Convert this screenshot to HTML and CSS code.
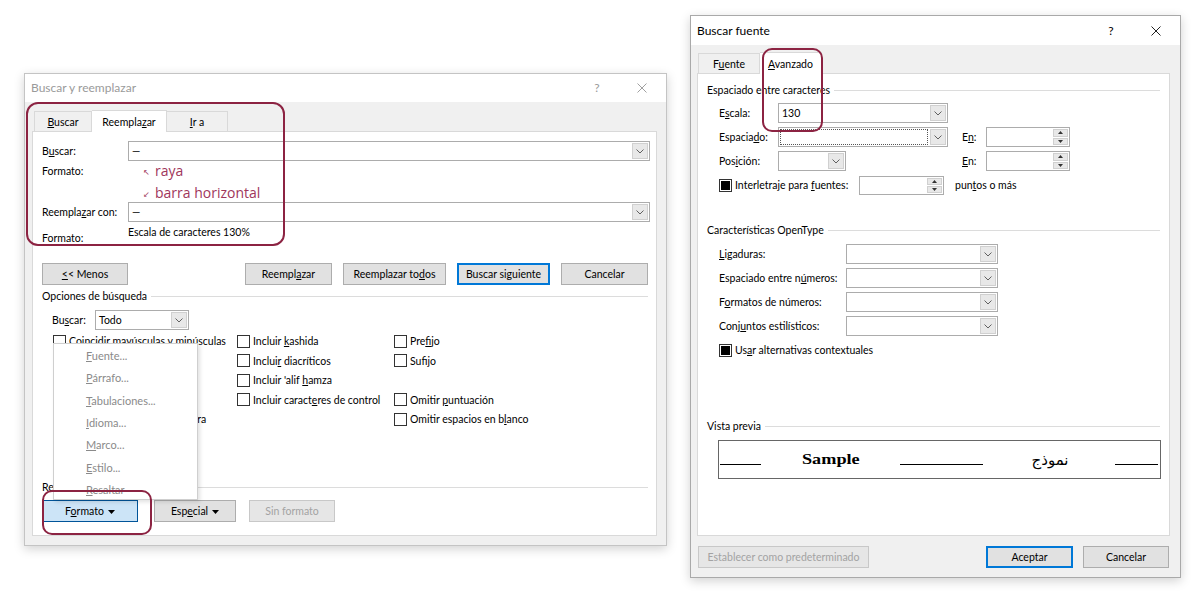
FILE: index.html
```html
<!DOCTYPE html>
<html lang="es">
<head>
  <meta charset="UTF-8">
  <title>Buscar y reemplazar / Buscar fuente</title>
  <link rel="stylesheet" href="styles.css">
</head>
<body>

  <!-- Buscar y reemplazar -->
  <div class="window find-replace">
    <div class="titlebar">
      <span class="title">Buscar y reemplazar</span>
      <span class="tb-help">?</span>
      <span class="tb-close"><svg width="10" height="10" viewBox="0 0 10 10"><path d="M0.5 0.5 9.5 9.5M9.5 0.5 0.5 9.5" stroke="#a0a0a0" stroke-width="1"/></svg></span>
    </div>
    <div class="tabs">
      <div class="tab tab-find"><span><u>B</u>uscar</span></div>
      <div class="tab tab-replace active"><span>Reempla<u>z</u>ar</span></div>
      <div class="tab tab-goto"><span><u>I</u>r a</span></div>
    </div>
    <div class="panel">
      <div class="field-row">
        <span>B<u>u</u>scar:</span>
        <div class="combo">
          <span class="combo-text">—</span>
          <span class="combo-btn"><svg width="8" height="5" viewBox="0 0 8 5"><path d="M0.5 0.5 4 4 7.5 0.5" fill="none" stroke="#606060"/></svg></span>
        </div>
      </div>
      <div class="notes-row">
        <span class="row-label">Formato:</span>
        <div class="notes">
          <div class="note"><span class="note-arrow">↖</span>raya</div>
          <div class="note"><span class="note-arrow">↙</span>barra horizontal</div>
        </div>
      </div>
      <div class="field-row">
        <span>Reempla<u>z</u>ar con:</span>
        <div class="combo">
          <span class="combo-text">—</span>
          <span class="combo-btn"><svg width="8" height="5" viewBox="0 0 8 5"><path d="M0.5 0.5 4 4 7.5 0.5" fill="none" stroke="#606060"/></svg></span>
        </div>
      </div>
      <div class="format-row">
        <span class="row-label">Formato:</span>
        <span class="format-value">Escala de caracteres 130%</span>
      </div>

      <div class="button-row">
        <button class="btn btn-less"><span><u>&lt;</u>&lt; Menos</span></button>
        <div class="action-buttons">
          <button class="btn btn-replace"><span>Reempl<u>a</u>zar</span></button>
          <button class="btn btn-replace-all"><span>Reemplazar to<u>d</u>os</span></button>
          <button class="btn btn-next default"><span>Buscar siguiente</span></button>
          <button class="btn btn-cancel"><span>Cancelar</span></button>
        </div>
      </div>

      <div class="group-legend options-legend">Opciones de búsqueda</div>
      <div class="search-in">
        <span class="search-in-label">Bu<u>s</u>car:</span>
        <div class="combo combo-todo">
          <span class="combo-text">Todo</span>
          <span class="combo-btn"><svg width="8" height="5" viewBox="0 0 8 5"><path d="M0.5 0.5 4 4 7.5 0.5" fill="none" stroke="#606060"/></svg></span>
        </div>
      </div>
      <div class="checks">
        <div class="check-item"><span class="box"></span><span>Coincidir mayúsculas y minúsculas</span></div>
        <div class="check-item"><span class="box"></span><span>Incluir <u>k</u>ashida</span></div>
        <div class="check-item"><span class="box"></span><span>Pre<u>f</u>ijo</span></div>

        <div class="check-item"><span class="box"></span></div>
        <div class="check-item"><span class="box"></span><span>Inclui<u>r</u> diacríticos</span></div>
        <div class="check-item"><span class="box"></span><span>Sufijo</span></div>

        <div class="check-item"><span class="box"></span></div>
        <div class="check-item"><span class="box"></span><span>Incluir 'alif <u>h</u>amza</span></div>
        <span></span>

        <div class="check-item"><span class="box"></span></div>
        <div class="check-item"><span class="box"></span><span>Incluir caract<u>e</u>res de control</span></div>
        <div class="check-item"><span class="box"></span><span>Omitir <u>p</u>untuación</span></div>

        <div class="check-item"><span class="box"></span><span><span class="covered">Omitir marcas de la impres</span>ora</span></div>
        <span></span>
        <div class="check-item"><span class="box"></span><span>Omitir espacios en b<u>l</u>anco</span></div>
      </div>

      <div class="group-legend replace-legend"><span>Re<span class="covered">emplazar</span></span></div>
      <div class="format-buttons">
        <button class="btn btn-format pressed"><span>F<u>o</u>rmato</span><svg class="caret" width="7" height="4" viewBox="0 0 7 4"><path d="M0 0h7L3.5 4z" fill="#000"/></svg></button>
        <button class="btn btn-special"><span>Esp<u>e</u>cial</span><svg class="caret" width="7" height="4" viewBox="0 0 7 4"><path d="M0 0h7L3.5 4z" fill="#000"/></svg></button>
        <button class="btn btn-noformat disabled"><span>Sin formato</span></button>
      </div>
    </div>

    <div class="popup-menu">
      <div class="menu-item"><span><u>F</u>uente...</span></div>
      <div class="menu-item"><span><u>P</u>árrafo...</span></div>
      <div class="menu-item"><span><u>T</u>abulaciones...</span></div>
      <div class="menu-item"><span><u>I</u>dioma...</span></div>
      <div class="menu-item"><span><u>M</u>arco...</span></div>
      <div class="menu-item"><span><u>E</u>stilo...</span></div>
      <div class="menu-item"><span><u>R</u>esaltar</span></div>
    </div>
  </div>

  <!-- Buscar fuente -->
  <div class="window font-dialog">
    <div class="titlebar">
      <span class="title">Buscar fuente</span>
      <span class="tb-help">?</span>
      <span class="tb-close"><svg width="10" height="10" viewBox="0 0 10 10"><path d="M0.5 0.5 9.5 9.5M9.5 0.5 0.5 9.5" stroke="#222" stroke-width="1"/></svg></span>
    </div>
    <div class="tabs">
      <div class="tab tab-font"><span>F<u>u</u>ente</span></div>
      <div class="tab tab-advanced active"><span><u>A</u>vanzado</span></div>
    </div>
    <div class="panel">
      <div class="group-legend">Espaciado entre caracteres</div>

      <div class="frow first">
        <span class="flabel">E<u>s</u>cala:</span>
        <div class="combo w170">
          <span class="combo-text">130</span>
          <span class="combo-btn"><svg width="8" height="5" viewBox="0 0 8 5"><path d="M0.5 0.5 4 4 7.5 0.5" fill="none" stroke="#606060"/></svg></span>
        </div>
      </div>
      <div class="frow">
        <span class="flabel">Espacia<u>d</u>o:</span>
        <div class="combo w170 focused">
          <span class="combo-text"></span>
          <span class="combo-btn"><svg width="8" height="5" viewBox="0 0 8 5"><path d="M0.5 0.5 4 4 7.5 0.5" fill="none" stroke="#606060"/></svg></span>
        </div>
        <span class="en-label">E<u>n</u>:</span>
        <div class="spin">
          <span class="spin-btns">
            <span class="spin-btn"><svg width="5" height="3" viewBox="0 0 5 3"><path d="M0 3h5L2.5 0z" fill="#333"/></svg></span>
            <span class="spin-btn"><svg width="5" height="3" viewBox="0 0 5 3"><path d="M0 0h5L2.5 3z" fill="#333"/></svg></span>
          </span>
        </div>
      </div>
      <div class="frow">
        <span class="flabel">Pos<u>i</u>ción:</span>
        <div class="combo w68">
          <span class="combo-text"></span>
          <span class="combo-btn"><svg width="8" height="5" viewBox="0 0 8 5"><path d="M0.5 0.5 4 4 7.5 0.5" fill="none" stroke="#606060"/></svg></span>
        </div>
        <span class="en-label en-far"><u>E</u>n:</span>
        <div class="spin">
          <span class="spin-btns">
            <span class="spin-btn"><svg width="5" height="3" viewBox="0 0 5 3"><path d="M0 3h5L2.5 0z" fill="#333"/></svg></span>
            <span class="spin-btn"><svg width="5" height="3" viewBox="0 0 5 3"><path d="M0 0h5L2.5 3z" fill="#333"/></svg></span>
          </span>
        </div>
      </div>
      <div class="frow">
        <span class="box mixed"></span>
        <span class="kern-label">Interletraje para <u>f</u>uentes:</span>
        <div class="spin spin-kern">
          <span class="spin-btns">
            <span class="spin-btn"><svg width="5" height="3" viewBox="0 0 5 3"><path d="M0 3h5L2.5 0z" fill="#333"/></svg></span>
            <span class="spin-btn"><svg width="5" height="3" viewBox="0 0 5 3"><path d="M0 0h5L2.5 3z" fill="#333"/></svg></span>
          </span>
        </div>
        <span class="points">pun<u>t</u>os o más</span>
      </div>

      <div class="group-legend opentype-legend">Características OpenType</div>

      <div class="frow orow first-o">
        <span class="olabel"><u>L</u>igaduras:</span>
        <div class="combo w152"><span class="combo-text"></span><span class="combo-btn"><svg width="8" height="5" viewBox="0 0 8 5"><path d="M0.5 0.5 4 4 7.5 0.5" fill="none" stroke="#606060"/></svg></span></div>
      </div>
      <div class="frow orow">
        <span class="olabel">Espaciado entre n<u>ú</u>meros:</span>
        <div class="combo w152"><span class="combo-text"></span><span class="combo-btn"><svg width="8" height="5" viewBox="0 0 8 5"><path d="M0.5 0.5 4 4 7.5 0.5" fill="none" stroke="#606060"/></svg></span></div>
      </div>
      <div class="frow orow">
        <span class="olabel">F<u>o</u>rmatos de números:</span>
        <div class="combo w152"><span class="combo-text"></span><span class="combo-btn"><svg width="8" height="5" viewBox="0 0 8 5"><path d="M0.5 0.5 4 4 7.5 0.5" fill="none" stroke="#606060"/></svg></span></div>
      </div>
      <div class="frow orow">
        <span class="olabel">Conj<u>u</u>ntos estilísticos:</span>
        <div class="combo w152"><span class="combo-text"></span><span class="combo-btn"><svg width="8" height="5" viewBox="0 0 8 5"><path d="M0.5 0.5 4 4 7.5 0.5" fill="none" stroke="#606060"/></svg></span></div>
      </div>
      <div class="frow">
        <span class="box mixed"></span>
        <span>Us<u>a</u>r alternativas contextuales</span>
      </div>

      <div class="group-legend preview-legend">Vista previa</div>
      <div class="preview">
        <span class="pv-line pv-line-1"></span>
        <span class="pv-sample">Sample</span>
        <span class="pv-line pv-line-2"></span>
        <span class="pv-arabic" dir="rtl">نموذج</span>
        <span class="pv-line pv-line-3"></span>
      </div>
    </div>
    <div class="dialog-buttons">
      <button class="btn btn-default-set disabled"><span>Establecer como predeterminado</span></button>
      <button class="btn btn-ok default"><span>Aceptar</span></button>
      <button class="btn btn-cancel-2"><span>Cancelar</span></button>
    </div>
  </div>

  <!-- anotaciones -->
  <div class="mark mark-replace"></div>
  <div class="mark mark-format"></div>
  <div class="mark mark-tab"></div>

</body>
</html>
```

FILE: styles.css
```css
body {
  margin: 0;
  width: 1200px;
  height: 594px;
  position: relative;
  overflow: hidden;
  background: #fff;
  font-family: "Segoe UI", Lato, "Noto Sans", sans-serif;
  font-size: 10.5px;
  line-height: 14px;
  color: #000;
}

u {
  text-decoration-thickness: 1px;
  text-underline-offset: 1px;
}

button {
  font: inherit;
  color: inherit;
  padding: 0;
}

/* windows */

.window {
  position: absolute;
  box-sizing: border-box;
  display: flex;
  flex-direction: column;
  background: #f0f0f0;
  border: 1px solid #a9a9a9;
  box-shadow: 0 3px 10px rgba(0,0,0,0.18);
}

.find-replace {
  left: 24px;
  top: 73px;
  width: 643px;
  height: 473px;
  border-color: #c4c4c4;
}

.font-dialog {
  left: 690px;
  top: 15px;
  width: 491px;
  height: 563px;
}

.titlebar {
  display: flex;
  align-items: center;
  background: #fff;
  padding-left: 6px;
  font-size: 12px;
}

.find-replace .titlebar {
  height: 28px;
  color: #9a9a9a;
}

.font-dialog .titlebar {
  height: 29px;
}

.title {
  flex: 1;
}

.tb-help {
  width: 14px;
  text-align: center;
  margin-right: 31px;
}

.tb-close {
  width: 14px;
  display: flex;
  justify-content: center;
  margin-right: 17px;
}

/* tabs */

.tabs {
  display: flex;
  align-items: flex-end;
  height: 22px;
}

.find-replace .tabs {
  margin-top: 7px;
  padding-left: 9px;
}

.font-dialog .tabs {
  margin-top: 6px;
  padding-left: 7px;
}

.tab {
  box-sizing: border-box;
  height: 20px;
  display: flex;
  align-items: center;
  justify-content: center;
  background: #f0f0f0;
  border: 1px solid #d9d9d9;
  border-bottom: none;
}

.tab + .tab {
  border-left: none;
}

.tab.active {
  height: 22px;
  margin-bottom: -1px;
  background: #fff;
  position: relative;
  z-index: 1;
}

.tab-find { width: 58px; }
.tab-replace { width: 75px; }
.tab-goto { width: 61px; }
.tab-font { width: 62px; }
.tab-advanced { width: 62px; }

.panel {
  box-sizing: border-box;
  background: #fff;
  border: 1px solid #d9d9d9;
}

.find-replace .panel {
  margin-left: 7px;
  width: 625px;
  height: 405px;
  padding: 9px 6px 0 9px;
}

.font-dialog .panel {
  margin-left: 6px;
  width: 473px;
  height: 463px;
  padding: 9px 9px 0 9px;
}

/* controls */

.combo {
  box-sizing: border-box;
  height: 20px;
  display: flex;
  background: #fff;
  border: 1px solid #acacac;
}

.combo-text {
  flex: 1;
  display: flex;
  align-items: center;
  padding-left: 3px;
}

.combo-btn {
  box-sizing: border-box;
  width: 16px;
  margin: 1px;
  display: flex;
  align-items: center;
  justify-content: center;
  background: #e8e8e8;
  border: 1px solid #d0d0d0;
}

.combo.focused .combo-text {
  margin: 1px;
  border: 1px dotted #555;
}

.spin {
  box-sizing: border-box;
  width: 84px;
  height: 20px;
  display: flex;
  justify-content: flex-end;
  background: #fff;
  border: 1px solid #acacac;
}

.spin-btns {
  width: 15px;
  margin: 1px;
  display: flex;
  flex-direction: column;
  gap: 1px;
}

.spin-btn {
  flex: 1;
  display: flex;
  align-items: center;
  justify-content: center;
  background: #e8e8e8;
  border: 1px solid #d0d0d0;
}

.box {
  box-sizing: border-box;
  flex: none;
  width: 13px;
  height: 13px;
  margin-right: 3px;
  background: #fff;
  border: 1px solid #333;
}

.box.mixed {
  border-width: 2px;
  border-color: #fff;
  background: #000;
  outline: 1px solid #333;
  outline-offset: -1px;
}

.btn {
  box-sizing: border-box;
  height: 22px;
  display: flex;
  align-items: center;
  justify-content: center;
  background: #e1e1e1;
  border: 1px solid #adadad;
  white-space: nowrap;
}

.btn.default {
  border-color: #0078d7;
  box-shadow: inset 0 0 0 1px #0078d7;
}

.btn.pressed {
  background: #cce4f7;
  border-color: #005499;
}

.btn.disabled {
  color: #a3a3a3;
  background: #e6e6e6;
  border-color: #c8c8c8;
}

.caret {
  margin-left: 4px;
  margin-top: 1px;
}

.group-legend {
  display: flex;
  align-items: center;
  height: 14px;
  white-space: nowrap;
}

.group-legend::after {
  content: "";
  flex: 1;
  height: 1px;
  margin-left: 4px;
  background: #dcdcdc;
}

.covered {
  visibility: hidden;
}

/* Buscar y reemplazar */

.field-row {
  display: grid;
  grid-template-columns: 86px 1fr;
  align-items: center;
}

.notes-row {
  display: grid;
  grid-template-columns: 86px 1fr;
  height: 41px;
}

.row-label {
  line-height: 20px;
}

.notes {
  padding-left: 15px;
  font-family: "Open Sans", "Noto Sans", sans-serif;
  font-size: 14px;
  line-height: 20px;
  color: #a0365b;
}

.note-arrow {
  display: inline-block;
  width: 8px;
  margin-right: 4px;
  font-family: "DejaVu Sans", sans-serif;
  font-size: 8px;
  vertical-align: 1px;
}

.format-row {
  display: grid;
  grid-template-columns: 86px 1fr;
  height: 24px;
}

.format-row .row-label {
  align-self: end;
  line-height: 14px;
  padding-bottom: 1px;
}

.format-value {
  padding-top: 3px;
}

.button-row {
  display: flex;
  justify-content: space-between;
  margin-top: 17px;
  margin-right: 2px;
}

.action-buttons {
  display: flex;
  gap: 11px;
}

.btn-less { width: 86px; }
.btn-replace { width: 87px; }
.btn-replace-all { width: 103px; }
.btn-next { width: 93px; }
.btn-cancel { width: 87px; }

.options-legend {
  margin-top: 4px;
  margin-right: 2px;
}

.search-in {
  display: flex;
  align-items: center;
  margin-top: 7px;
  padding-left: 10px;
}

.search-in-label {
  width: 43px;
}

.combo-todo {
  width: 94px;
}

.checks {
  display: grid;
  grid-template-columns: 184px 157px 1fr;
  grid-auto-rows: 19.5px;
  margin-top: 1.5px;
  padding-left: 11px;
}

.check-item {
  display: flex;
  align-items: center;
  white-space: nowrap;
}

.replace-legend {
  margin-top: 51px;
  margin-right: 2px;
}

.format-buttons {
  display: flex;
  margin-top: 6px;
}

.btn-format { width: 96px; }
.btn-special { width: 82px; margin-left: 16px; }
.btn-noformat { width: 86px; margin-left: 13px; }

.popup-menu {
  position: absolute;
  left: 28px;
  top: 269px;
  width: 145px;
  height: 157px;
  box-sizing: border-box;
  padding-top: 1px;
  background: #fff;
  border: 1px solid #cfcfcf;
  box-shadow: 2px 2px 4px rgba(0,0,0,0.12);
  overflow: hidden;
  z-index: 2;
}

.menu-item {
  height: 22.3px;
  display: flex;
  align-items: center;
  padding-left: 32px;
  font-size: 11px;
  color: #8a8a8a;
}

/* Buscar fuente */

.frow {
  display: flex;
  align-items: center;
  height: 20px;
  margin-top: 4px;
  padding-left: 12px;
  white-space: nowrap;
}

.frow.first {
  margin-top: 6px;
}

.flabel {
  width: 59px;
}

.w170 { width: 170px; }
.w68 { width: 68px; }
.w152 { width: 152px; }

.en-label {
  width: 24px;
  margin-left: 14px;
}

.en-label.en-far {
  margin-left: 116px;
}

.kern-label {
  width: 124px;
}

.spin-kern {
  width: 85px;
  height: 19px;
}

.points {
  margin-left: 11px;
}

.opentype-legend {
  margin-top: 28px;
}

.frow.first-o {
  margin-top: 7px;
}

.olabel {
  width: 127px;
}

.preview-legend {
  margin-top: 59px;
}

.preview {
  box-sizing: border-box;
  width: 443px;
  height: 39px;
  margin-top: 7px;
  margin-left: 11px;
  display: flex;
  align-items: center;
  border: 1px solid #666;
}

.pv-line {
  height: 1px;
  margin-top: 10px;
  background: #000;
}

.pv-line-1 { width: 41px; margin-left: 1px; }
.pv-line-2 { width: 83px; margin-left: 42px; }
.pv-line-3 { width: 43px; margin-left: 45px; }

.pv-sample {
  width: 56px;
  margin-left: 41px;
  font-family: "Liberation Serif", serif;
  font-weight: bold;
  font-size: 14px;
  transform: scaleX(1.3);
  transform-origin: left center;
}

.pv-arabic {
  width: 40px;
  margin-left: 47px;
  font-family: "Liberation Serif", "DejaVu Serif", "DejaVu Sans", serif;
  font-size: 15px;
  text-align: center;
}

.dialog-buttons {
  display: flex;
  margin-top: 10px;
  padding: 0 11px 0 7px;
}

.btn-default-set { width: 171px; }
.btn-ok { width: 87px; margin-left: auto; }
.btn-cancel-2 { width: 86px; margin-left: 10px; }

/* anotaciones */

.mark {
  position: absolute;
  box-sizing: border-box;
  border: 2px solid #8c2342;
  border-radius: 12px;
  z-index: 5;
}

.mark-replace {
  left: 26px;
  top: 102px;
  width: 259px;
  height: 144px;
}

.mark-format {
  left: 42px;
  top: 490px;
  width: 110px;
  height: 45px;
  border-radius: 10px;
}

.mark-tab {
  left: 762px;
  top: 48px;
  width: 61px;
  height: 84px;
  border-radius: 10px;
}
```
